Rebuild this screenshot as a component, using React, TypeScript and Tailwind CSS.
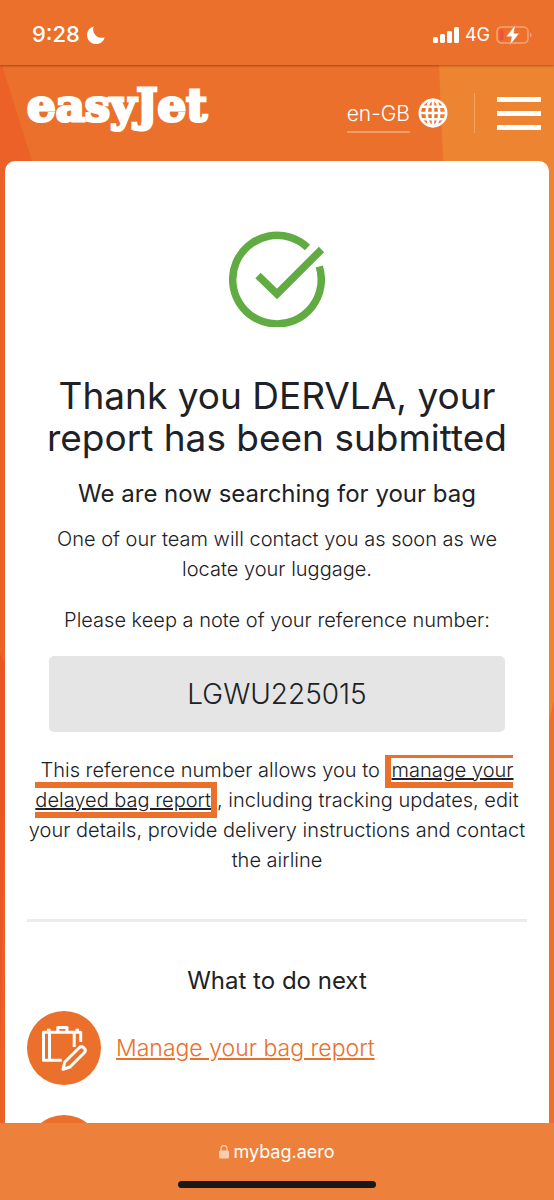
const steps = [{ label: "Manage your bag report", href: "#manage" }];

function StatusBar() {
  return (
    <div className="relative z-10 flex h-[65px] shrink-0 items-center justify-between bg-[#ea702c] px-8 pt-1 text-white shadow-[0_1px_2px_rgba(0,0,0,0.35)]">
      <div className="flex items-center gap-[7px]">
        <span className="text-[22px] font-medium">9:28</span>
        <svg width="18" height="18" viewBox="0 0 18 18" fill="currentColor" aria-hidden="true">
          <path d="M6.600 0.400A9 9 0 1 0 17.700 11.400C10.500 13.500 4.500 7.500 6.600 0.400Z" />
        </svg>
      </div>
      <div className="-mr-2.5 flex items-center gap-1.5">
        <svg width="26" height="16" viewBox="0 0 26 16" fill="currentColor" aria-hidden="true">
          <rect x="0" y="10" width="5" height="6" rx="1.5" />
          <rect x="7" y="7" width="5" height="9" rx="1.5" />
          <rect x="14" y="4" width="5" height="12" rx="1.5" />
          <rect x="21" y="0" width="5" height="16" rx="1.5" />
        </svg>
        <span className="text-lg">4G</span>
        <svg width="36" height="22" viewBox="0 0 36 22" fill="none" aria-hidden="true">
          <rect x="1" y="3" width="31" height="16" rx="4.5" stroke="#f3a57a" strokeWidth="1.5" />
          <path d="M34 8.500v5c2-.7 2-4.300 0-5Z" fill="#f3a57a" />
          <rect x="3.500" y="5.500" width="4" height="11" rx="2" fill="#f2503c" />
          <path
            d="M19.500 0.500 10 12.800h5.400L13.800 21.500 23.500 9.200h-5.600Z"
            fill="#fff"
            stroke="#ea702c"
            strokeWidth="0.600"
          />
        </svg>
      </div>
    </div>
  );
}

function Backdrop() {
  return (
    <svg
      className="absolute inset-0 h-full w-full"
      viewBox="0 0 554 1058"
      preserveAspectRatio="none"
      aria-hidden="true"
    >
      <rect width="554" height="1058" fill="#ea702c" />
      <path d="M0 0h2L332 1058H0Z" fill="#ec6128" />
      <path d="M0 588 5 598V730L0 1000Z" fill="#ea5726" />
      <path d="M439 0H554V635L480 960Z" fill="#ed8431" />
    </svg>
  );
}

function GlobeIcon() {
  return (
    <svg
      width="30"
      height="30"
      viewBox="0 0 30 30"
      fill="none"
      stroke="currentColor"
      strokeWidth="2.600"
      aria-hidden="true"
    >
      <circle cx="15" cy="15" r="13.200" />
      <ellipse cx="15" cy="15" rx="6.300" ry="13.200" />
      <path d="M15 2v26M2 15h26M4 8.700h22M4 21.300h22" />
    </svg>
  );
}

function Header() {
  return (
    <header className="relative flex h-24 shrink-0 items-center justify-between pr-[13px] pl-[27px] text-white">
      <a
        href="#home"
        className="pb-4 font-['DejaVu_Serif'] text-[45px] leading-none font-bold [-webkit-text-stroke:3px_white]"
      >
        easyJet
      </a>
      <div className="flex items-center">
        <button type="button" className="flex items-center gap-2">
          <span className="border-b-2 border-[#f3a06c] pt-1 text-[21px] leading-[34px] font-light">
            en-GB
          </span>
          <GlobeIcon />
        </button>
        <span className="mr-[22px] ml-[26px] h-10 w-px bg-[#f6a662]" />
        <button type="button" aria-label="Menu" className="flex w-11 flex-col gap-[9px]">
          <span className="h-[5px] bg-white" />
          <span className="h-[5px] bg-white" />
          <span className="h-[5px] bg-white" />
        </button>
      </div>
    </header>
  );
}

function BagIcon() {
  return (
    <span className="flex size-[74px] shrink-0 items-center justify-center rounded-full bg-[#ea702c]">
      <svg
        width="46"
        height="46"
        viewBox="0 0 46 46"
        fill="none"
        stroke="white"
        strokeWidth="3"
        strokeLinejoin="round"
        aria-hidden="true"
      >
        {/* Suitcase */}
        <path d="M20.700 35.300H2.500V7.300H39.700V17M8.500 7.300V35.300M33.200 7.300V22" />
        <path d="M16.800 7V2.500H26V7" />
        <path d="M6 5.200H9.500M34.500 5.200H38" />
        {/* Pencil */}
        <path d="M22 44.200 23.800 37 38.500 22.500C41.500 20 46 24.500 43.500 27.500L29 42Z" />
      </svg>
    </span>
  );
}

export default function App() {
  return (
    <div className="flex h-screen flex-col overflow-hidden bg-[#ea702c] font-[Inter,sans-serif] text-[#202126]">
      <StatusBar />

      <div className="relative flex min-h-0 flex-1 flex-col overflow-hidden">
        <Backdrop />
        <Header />

        <main className="relative mx-[5px] shrink-0 rounded-t-[10px] bg-white px-[22px] pt-[70px] text-center">
          <svg className="mx-auto" width="96" height="96" viewBox="0 0 96 96" fill="none" aria-hidden="true">
            <g stroke="#61ab43" strokeWidth="7.500">
              <path d="M78.500 16.500A44.300 44.300 0 1 0 90.300 35.500" />
              <path d="M29 44.500 48 63 92.500 18.500" />
            </g>
          </svg>

          <h1 className="mt-12 text-[37px] leading-[42px]">
            Thank you DERVLA, your report has been submitted
          </h1>
          <h2 className="mt-5 text-[24px] leading-[30px]">We are now searching for your bag</h2>
          <p className="mt-[15px] px-5 text-[20px] leading-[30px] font-light">
            One of our team will contact you as soon as we locate your luggage.
          </p>
          <p className="mt-[21px] text-[20px] leading-[30px] font-light">
            Please keep a note of your reference number:
          </p>

          <div className="mx-[22px] mt-[21px] rounded-[5px] bg-[#e5e5e5] py-[19px] text-[28px] leading-[38px] font-light">
            LGWU225015
          </div>

          <p className="mt-[23px] overflow-hidden text-[20px] leading-[30px] font-light">
            This reference number allows you to{" "}
            <a href="#manage" className="border-[6px] border-[#ea702c] underline">
              manage your delayed bag report
            </a>
            , including tracking updates, edit your details, provide delivery instructions and contact the airline
          </p>

          <hr className="mt-11 border-t-[3px] border-[#ebebeb]" />

          <h2 className="mt-11 text-[24px] leading-[30px]">What to do next</h2>

          <ul className="mt-[15px] flex flex-col gap-[30px]">
            {steps.map((step) => (
              <li key={step.label} className="flex items-center gap-[15px]">
                <BagIcon />
                <a href={step.href} className="text-[23px] leading-[30px] font-light text-[#ea702c] underline">
                  {step.label}
                </a>
              </li>
            ))}
            <li>
              <BagIcon />
            </li>
          </ul>
        </main>
      </div>

      <footer className="relative z-10 flex h-[77px] shrink-0 flex-col items-center justify-between bg-[#ed813b] pt-4 pb-3 text-white">
        <div className="flex items-center gap-1 text-[18px] leading-[26px]">
          <svg width="10" height="14" viewBox="0 0 10 14" fill="none" aria-hidden="true">
            <rect y="5.500" width="10" height="8" rx="1.500" fill="#f9cdb0" />
            <path d="M2 6V3.500a3 3 0 0 1 6 0V6" stroke="#f9cdb0" strokeWidth="1.300" />
          </svg>
          mybag.aero
        </div>
        <div className="h-[7px] w-[198px] rounded-full bg-[#1b1815]" />
      </footer>
    </div>
  );
}
